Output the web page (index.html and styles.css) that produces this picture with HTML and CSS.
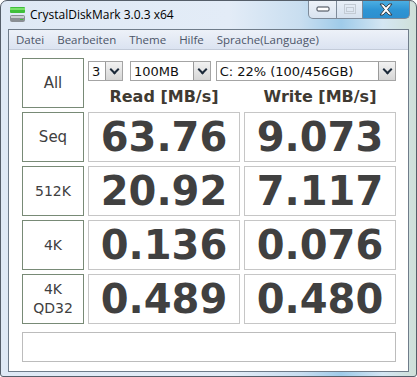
FILE: index.html
```html
<!DOCTYPE html>
<html>
<head>
    <meta charset="UTF-8">
    <title>CrystalDiskMark 3.0.3 x64</title>
    <link rel="stylesheet" href="styles.css">
</head>
<body>
    <div class="window">
        <div class="titlebar">
            <svg class="app-icon" width="17" height="17" viewBox="0 0 17 17">
                <rect x="1" y="1" width="15" height="6" rx="1" fill="#3fbf3a"/>
                <rect x="1" y="2" width="15" height="2" fill="#7be06a"/>
                <rect x="1" y="9" width="15" height="7" rx="2" fill="#8a8f94"/>
                <rect x="2" y="10" width="13" height="2" fill="#c9cdd1"/>
                <rect x="11" y="13" width="3" height="1" fill="#3fbf3a"/>
            </svg>
            <span class="title">CrystalDiskMark 3.0.3 x64</span>
            <div class="caption-buttons">
                <div class="cap cap-min">
                    <svg width="14" height="8" viewBox="0 0 14 8"><rect x="1" y="2" width="12" height="4" rx="1" fill="#fff" stroke="#38414c"/></svg>
                </div>
                <div class="cap cap-max">
                    <svg width="12" height="10" viewBox="0 0 12 10"><rect x="0.5" y="0.5" width="11" height="9" fill="none" stroke="#c3cbd4"/><rect x="2.5" y="3.5" width="7" height="4" fill="none" stroke="#c3cbd4"/></svg>
                </div>
                <div class="cap cap-close">
                    <svg width="16" height="13" viewBox="0 0 16 13"><path d="M2 1 L5 1 L8 4.2 L11 1 L14 1 L9.6 6.5 L14 12 L11 12 L8 8.8 L5 12 L2 12 L6.4 6.5 Z" fill="#fff" stroke="#3a3f46" stroke-width="1"/></svg>
                </div>
            </div>
        </div>
        <div class="frame">
            <div class="menubar">
                <span>Datei</span>
                <span>Bearbeiten</span>
                <span>Theme</span>
                <span>Hilfe</span>
                <span>Sprache(Language)</span>
            </div>
            <div class="client">
                <div class="grid">
                    <div class="label label-hand">All</div>
                    <div class="top">
                        <div class="combos">
                            <div class="combo combo-count"><span>3</span><i class="arrow"></i></div>
                            <div class="combo combo-size"><span>100MB</span><i class="arrow"></i></div>
                            <div class="combo combo-drive"><span>C: 22% (100/456GB)</span><i class="arrow"></i></div>
                        </div>
                        <div class="heads">
                            <div class="head">Read [MB/s]</div>
                            <div class="head">Write [MB/s]</div>
                        </div>
                    </div>

                    <div class="label label-hand">Seq</div>
                    <div class="value">63.76</div>
                    <div class="value">9.073</div>

                    <div class="label">512K</div>
                    <div class="value">20.92</div>
                    <div class="value">7.117</div>

                    <div class="label">4K</div>
                    <div class="value">0.136</div>
                    <div class="value">0.076</div>

                    <div class="label label-two">4K<br>QD32</div>
                    <div class="value">0.489</div>
                    <div class="value">0.480</div>
                </div>
                <div class="comment"></div>
            </div>
        </div>
    </div>
</body>
</html>
```

FILE: styles.css
```css
body {
    margin: 0;
    background: #ffffff;
    font-family: "DejaVu Sans", sans-serif;
}

.window {
    width: 417px;
    height: 377px;
    box-sizing: border-box;
    border: 1px solid #555e69;
    border-radius: 7px 7px 3px 3px;
    background: linear-gradient(90deg, #dfe9f5 0%, #e3ecf7 55%, #c9def0 72%, #9fcbe9 82%, #d4e6f3 92%, #cfe0d8 100%);
    overflow: hidden;
}

.titlebar {
    height: 28px;
    display: flex;
    align-items: center;
    position: relative;
}

.app-icon {
    margin-left: 8px;
    margin-top: -1px;
}

.title {
    margin-left: 4px;
    font-family: "Open Sans", sans-serif;
    font-size: 12px;
    color: #000000;
    margin-top: -1px;
}

.caption-buttons {
    position: absolute;
    top: -1px;
    right: 6px;
    display: flex;
}

.cap {
    height: 19px;
    display: flex;
    align-items: center;
    justify-content: center;
    box-sizing: border-box;
    border: 1px solid #7d8a99;
    border-top: none;
}

.cap-min {
    width: 29px;
    border-radius: 0 0 0 5px;
    background: linear-gradient(#eef3f9, #d9e3ef);
}

.cap-max {
    width: 26px;
    border-left: none;
    background: linear-gradient(#e9f0f8, #d6e1ee);
}

.cap-close {
    width: 47px;
    border-left: none;
    border-radius: 0 0 5px 0;
    background: linear-gradient(#4fb1e3, #2e95d4 55%, #2d8fcf);
}

.frame {
    margin: 0 7px;
    border: 1px solid #6f7c8a;
    height: 341px;
    display: flex;
    flex-direction: column;
}

.menubar {
    height: 19px;
    display: flex;
    align-items: center;
    padding-left: 7px;
    background: linear-gradient(#edf1f8, #dbe3f1);
    border-bottom: 1px solid #c3cbd9;
    font-family: "Open Sans", sans-serif;
    font-size: 11.5px;
    color: #4c5568;
}

.menubar span {
    margin-right: 13px;
}

.client {
    flex: 1;
    background: #ffffff;
    padding: 8px 0 0 13px;
}

.grid {
    display: grid;
    grid-template-columns: 62px 152px 152px;
    grid-auto-rows: 50px;
    column-gap: 4px;
    row-gap: 4px;
}

.label {
    border: 1px solid #788a76;
    display: flex;
    align-items: center;
    justify-content: center;
    text-align: center;
    font-size: 14px;
    color: #404040;
}

.label-hand {
    font-size: 15px;
}

.label-two {
    line-height: 19px;
}

.top {
    grid-column: 2 / 4;
    display: flex;
    flex-direction: column;
}

.combos {
    display: flex;
    margin-top: 3px;
    height: 20px;
}

.combo {
    box-sizing: border-box;
    height: 20px;
    border: 1px solid #a4a4a4;
    display: flex;
    align-items: center;
    justify-content: space-between;
    font-size: 13px;
    color: #111111;
    padding-left: 3px;
}

.combo-count {
    width: 35px;
}

.combo-size {
    width: 81px;
    margin-left: 7px;
}

.combo-drive {
    width: 181px;
    margin-left: 5px;
}

.arrow {
    width: 17px;
    height: 18px;
    box-sizing: border-box;
    border-left: 1px solid #9a9a9a;
    background: linear-gradient(#f2f2f2, #d6d6d6);
    position: relative;
}

.arrow::after {
    content: "";
    position: absolute;
    left: 5px;
    top: 4px;
    width: 5px;
    height: 5px;
    border-right: 2px solid #1c2a3a;
    border-bottom: 2px solid #1c2a3a;
    transform: rotate(45deg);
}

.heads {
    display: flex;
    gap: 4px;
    margin-top: 6px;
}

.head {
    width: 152px;
    text-align: center;
    font-weight: bold;
    font-size: 16px;
    color: #3f3a32;
}

.value {
    border: 1px solid #c6c6c6;
    display: flex;
    align-items: center;
    justify-content: center;
    font-weight: bold;
    font-size: 40px;
    color: #404040;
    padding-bottom: 1px;
}

.comment {
    margin-top: 8px;
    width: 374px;
    height: 30px;
    box-sizing: border-box;
    border: 1px solid #bcbcbc;
}
```
